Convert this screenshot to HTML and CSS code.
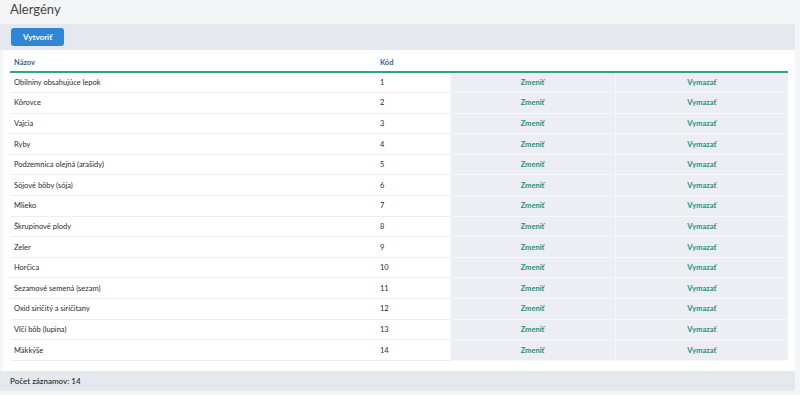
FILE: index.html
```html
<!DOCTYPE html>
<html lang="sk">
<head>
  <meta charset="UTF-8" />
  <title>Alergény</title>
  <link rel="stylesheet" href="styles.css">
</head>
<body>
  <h1 class="nadpis">Alergény</h1>

  <div class="panel">
    <div class="lista">
      <button class="btn-vytvorit">Vytvoriť</button>
    </div>

    <div class="karta">
      <table class="tabulka">
        <thead>
          <tr>
            <th class="col-nazov">Názov</th>
            <th class="col-kod">Kód</th>
            <th class="col-zmenit"></th>
            <th></th>
          </tr>
        </thead>
        <tbody>
          <tr><td>Obilniny obsahujúce lepok</td><td>1</td><td class="akcia"><a href="#">Zmeniť</a></td><td class="akcia"><a href="#">Vymazať</a></td></tr>
          <tr><td>Kôrovce</td><td>2</td><td class="akcia"><a href="#">Zmeniť</a></td><td class="akcia"><a href="#">Vymazať</a></td></tr>
          <tr><td>Vajcia</td><td>3</td><td class="akcia"><a href="#">Zmeniť</a></td><td class="akcia"><a href="#">Vymazať</a></td></tr>
          <tr><td>Ryby</td><td>4</td><td class="akcia"><a href="#">Zmeniť</a></td><td class="akcia"><a href="#">Vymazať</a></td></tr>
          <tr><td>Podzemnica olejná (arašidy)</td><td>5</td><td class="akcia"><a href="#">Zmeniť</a></td><td class="akcia"><a href="#">Vymazať</a></td></tr>
          <tr><td>Sójové bôby (sója)</td><td>6</td><td class="akcia"><a href="#">Zmeniť</a></td><td class="akcia"><a href="#">Vymazať</a></td></tr>
          <tr><td>Mlieko</td><td>7</td><td class="akcia"><a href="#">Zmeniť</a></td><td class="akcia"><a href="#">Vymazať</a></td></tr>
          <tr><td>Škrupinové plody</td><td>8</td><td class="akcia"><a href="#">Zmeniť</a></td><td class="akcia"><a href="#">Vymazať</a></td></tr>
          <tr><td>Zeler</td><td>9</td><td class="akcia"><a href="#">Zmeniť</a></td><td class="akcia"><a href="#">Vymazať</a></td></tr>
          <tr><td>Horčica</td><td>10</td><td class="akcia"><a href="#">Zmeniť</a></td><td class="akcia"><a href="#">Vymazať</a></td></tr>
          <tr><td>Sezamové semená (sezam)</td><td>11</td><td class="akcia"><a href="#">Zmeniť</a></td><td class="akcia"><a href="#">Vymazať</a></td></tr>
          <tr><td>Oxid siričitý a siričitany</td><td>12</td><td class="akcia"><a href="#">Zmeniť</a></td><td class="akcia"><a href="#">Vymazať</a></td></tr>
          <tr><td>Vlčí bôb (lupina)</td><td>13</td><td class="akcia"><a href="#">Zmeniť</a></td><td class="akcia"><a href="#">Vymazať</a></td></tr>
          <tr><td>Mäkkýše</td><td>14</td><td class="akcia"><a href="#">Zmeniť</a></td><td class="akcia"><a href="#">Vymazať</a></td></tr>
        </tbody>
      </table>
    </div>

    <div class="pata">Počet záznamov: 14</div>
  </div>
</body>
</html>
```

FILE: styles.css
```css
:root {
  --pozadie: #f4f5f7;
  --sede: #e5e8ee;
  --modra: #2f86d6;
  --tyrkys: #2aa58a;
  --zelena: #23907a;
}

* {
  margin: 0;
  padding: 0;
  box-sizing: border-box;
}

body {
  font-family: 'Lato', 'Open Sans', sans-serif;
  background-color: var(--pozadie);
  color: #2b2b2b;
  width: 800px;
  height: 395px;
  overflow: hidden;
}

.nadpis {
  height: 24px;
  padding: 1px 0 0 10px;
  font-size: 13px;
  font-weight: 400;
  line-height: 16px;
  color: #444;
}

.panel {
  width: 795px;
}

.lista {
  background-color: var(--sede);
  height: 26px;
  padding: 0 11px;
  display: flex;
  align-items: center;
}

.btn-vytvorit {
  font-family: inherit;
  font-size: 8px;
  font-weight: bold;
  color: white;
  background-color: var(--modra);
  border: none;
  border-radius: 3px;
  height: 18px;
  width: 53px;
  cursor: pointer;
}

.karta {
  background-color: white;
  margin-left: 3px;
  padding: 0 7px 9px 7px;
  height: 321px;
}

.tabulka {
  width: 100%;
  border-collapse: collapse;
  table-layout: fixed;
  font-size: 7.5px;
}

.tabulka th {
  text-align: left;
  font-weight: bold;
  color: #3a5d9c;
  height: 22px;
  padding: 4px 4px 0 4px;
  border-bottom: 2px solid var(--tyrkys);
}

.col-nazov { width: 366px; }
.col-kod { width: 74px; }
.col-zmenit { width: 165px; }

.tabulka td {
  height: 20.6px;
  padding: 0 4px;
  border-bottom: 1px solid #eceef2;
}

.tabulka td.akcia {
  background-color: #eceef3;
  text-align: center;
  border-bottom: 1px solid #f6f7f9;
  border-left: 1px solid #f6f7f9;
}

.akcia a {
  color: var(--zelena);
  font-weight: bold;
  text-decoration: none;
}

.pata {
  background-color: var(--sede);
  height: 20px;
  padding: 0 10px;
  line-height: 20px;
  font-size: 8px;
  font-weight: 600;
  color: #333;
}
```
